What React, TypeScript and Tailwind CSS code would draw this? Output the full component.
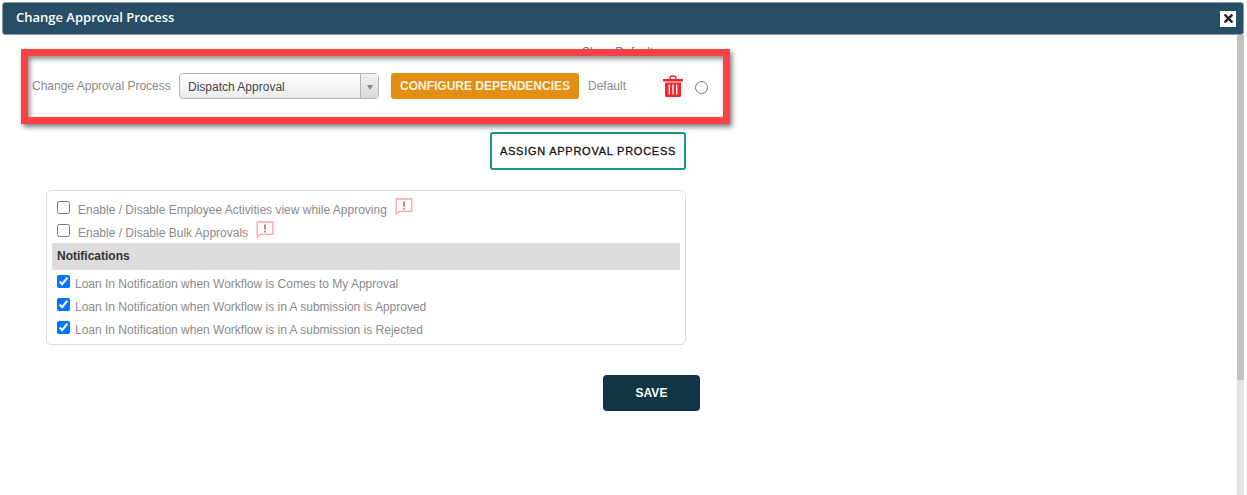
import { FaTimes } from "react-icons/fa";

const arial = "font-['Liberation_Sans',Arial,sans-serif]";

function Flag() {
  return (
    <svg width="18" height="17" viewBox="0 0 18 17" fill="none">
      <path d="M1.2 1h15.6v12.4H4.4L1.2 16z" stroke="#f9a3a3" strokeWidth="1.3" />
      <path d="M9 3.5v5M9 9.8v1.8" stroke="#ee5b5b" strokeWidth="1.7" />
    </svg>
  );
}

function TrashIcon() {
  return (
    <svg width="20" height="22" viewBox="0 0 20 22" fill="#f9242c">
      <path d="M6.5 4V1.6L7.8.4h4.4l1.3 1.2V4H20v2.4H0V4z M8 4h4V2H8z" fillRule="evenodd" />
      <path
        d="M2 7.5h16V20.5A1.5 1.5 0 0 1 16.500 22H3.500A1.500 1.500 0 0 1 2 20.500z M5.600 9.500v10h1.400v-10z M9.300 9.500v10h1.400v-10z M13 9.500v10h1.400v-10z"
        fillRule="evenodd"
      />
    </svg>
  );
}

const options = [
  "Enable / Disable Employee Activities view while Approving",
  "Enable / Disable Bulk Approvals",
];

const notifications = [
  "Loan In Notification when Workflow is Comes to My Approval",
  "Loan In Notification when Workflow is in A submission is Approved",
  "Loan In Notification when Workflow is in A submission is Rejected",
];

export default function App() {
  return (
    <div className={`flex h-[495px] w-[1247px] flex-col overflow-hidden bg-white pt-[2px] ${arial}`}>
      <div className="ml-[2px] flex h-[33px] w-[1242px] items-center justify-between rounded-[3px] border border-[#8b9aa3] bg-[#264f66] pl-[13px] pr-[6px]">
        <span className="-translate-y-[1px] font-['Open_Sans',sans-serif] text-[13px] font-semibold text-white">
          Change Approval Process
        </span>
        <span className="flex size-4 -translate-x-[1px] items-center justify-center bg-white text-[13px] text-[#222]">
          <FaTimes />
        </span>
      </div>

      <div className="relative flex min-h-0 flex-1">
        <div className="min-w-0 flex-1">
          <p className="ml-[582px] mt-[10px] h-[28px] text-xs leading-[14px] text-[#4f81a8]">Show Default</p>

          <div className="flex h-[26px] items-center pl-[32px] text-xs text-[#8a8a8a]">
            <span className="w-[147px]">Change Approval Process</span>
            <div className="flex h-[26px] w-[200px] items-center justify-between rounded-[4px] border border-[#b4b4b4] bg-linear-to-b from-white to-[#ececec] pl-[8px] text-[#444]">
              <span className="translate-y-[1px] text-xs">Dispatch Approval</span>
              <span className="flex h-full w-[18px] items-center justify-center border-l border-[#b4b4b4] bg-linear-to-b from-[#f2f2f2] to-[#d8d8d8]">
                <span className="mt-[2px] border-x-[3px] border-t-[5px] border-x-transparent border-t-[#888]" />
              </span>
            </div>
            <button className="ml-[12px] flex h-[26px] w-[188px] items-center justify-center rounded-[3px] bg-[#e28e13] text-xs font-bold text-[#fdf2df]">
              CONFIGURE DEPENDENCIES
            </button>
            <span className="ml-[9px] w-[75px]">Default</span>
            <TrashIcon />
            <input type="radio" readOnly className="ml-[12px] mt-[2px] size-[13px]" />
          </div>

          <div className="ml-[490px] mt-[33px] flex h-[38px] w-[196px] items-center justify-center rounded-[3px] border-2 border-[#1a9681] text-[11px] tracking-[0.75px] text-[#111] [-webkit-text-stroke:0.3px_#111]">
            ASSIGN APPROVAL PROCESS
          </div>

          <div className="ml-[46px] mt-[20px] h-[155px] w-[640px] rounded-[5px] border border-[#dcdcdc] px-[5px] pt-[5px] text-xs text-[#8a8a8a]">
            {options.map((label) => (
              <label key={label} className="flex h-[23px] items-center pl-[5px]">
                <input type="checkbox" readOnly className="m-0 size-[13px]" />
                <span className="ml-[8px] mt-[5px]">{label}</span>
                <span className="mb-[2px] ml-[8px]">
                  <Flag />
                </span>
              </label>
            ))}
            <div className="mt-[1px] flex h-[27px] items-center bg-[#dcdcdc] pb-[2px] pl-[5px] font-bold text-[#333]">
              Notifications
            </div>
            <div>
              {notifications.map((label) => (
                <label key={label} className="flex h-[23px] items-center pl-[5px]">
                  <input type="checkbox" defaultChecked readOnly className="m-0 size-[13px]" />
                  <span className="ml-[5px] mt-[5px]">{label}</span>
                </label>
              ))}
            </div>
          </div>

          <button className="ml-[603px] mt-[30px] flex h-[36px] w-[97px] items-center justify-center rounded-[4px] bg-[#0f3547] text-xs font-bold text-white">
            SAVE
          </button>
        </div>

        <div className="mr-[3px] w-[7px] bg-[#e3e3e5]">
          <div className="h-[345px] bg-[#c1c1c1]" />
        </div>

        <div className="pointer-events-none absolute left-[21px] top-[14px] h-[75px] w-[709px] border-[7px] border-[#fb4145] shadow-[2px_3px_5px_rgba(0,0,0,0.5),inset_2px_3px_5px_rgba(0,0,0,0.45)]" />
      </div>
    </div>
  );
}
